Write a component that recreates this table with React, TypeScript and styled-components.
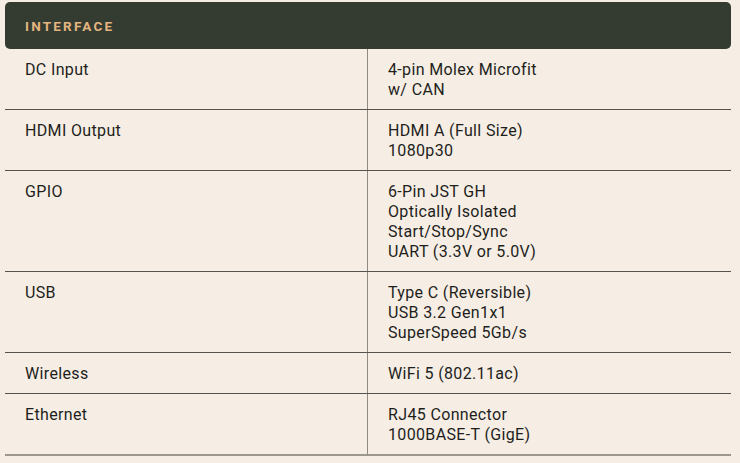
import styled, { createGlobalStyle } from "styled-components";

const GlobalStyle = createGlobalStyle`
  html, body {
    margin: 0;
    padding: 0;
    background: #f6eee4;
  }
  body {
    font-family: "Roboto", "Liberation Sans", sans-serif;
  }
`;

const Page = styled.div`
  padding: 2px 9px 0 5px;
`;

const Header = styled.div`
  background: #343c31;
  border-radius: 5px;
  height: 47px;
  display: flex;
  align-items: center;
  padding-left: 20px;
`;

const HeaderTitle = styled.h2`
  margin: 0;
  font-size: 13.5px;
  font-weight: 700;
  letter-spacing: 2.2px;
  color: #e4b580;
`;

const Table = styled.div`
  border-bottom: 2px solid #9c978f;
`;

const Row = styled.div<{ last?: boolean }>`
  display: grid;
  grid-template-columns: 362px 1fr;
  border-bottom: ${(p) => (p.last ? "none" : "1px solid #545350")};
`;

const Cell = styled.div<{ right?: boolean }>`
  padding: 11px 0 9px 20px;
  font-size: 16px;
  letter-spacing: 0.35px;
  line-height: 20px;
  color: #1e1e1c;
  border-left: ${(p) => (p.right ? "1px solid #8e8b85" : "none")};
`;

const Line = styled.div`
  white-space: nowrap;
`;

const rows: { label: string; values: string[] }[] = [
  { label: "DC Input", values: ["4-pin Molex Microfit", "w/ CAN"] },
  { label: "HDMI Output", values: ["HDMI A (Full Size)", "1080p30"] },
  {
    label: "GPIO",
    values: [
      "6-Pin JST GH",
      "Optically Isolated",
      "Start/Stop/Sync",
      "UART (3.3V or 5.0V)",
    ],
  },
  {
    label: "USB",
    values: ["Type C (Reversible)", "USB 3.2 Gen1x1", "SuperSpeed 5Gb/s"],
  },
  { label: "Wireless", values: ["WiFi 5 (802.11ac)"] },
  { label: "Ethernet", values: ["RJ45 Connector", "1000BASE-T (GigE)"] },
];

const App = () => {
  return (
    <>
      <GlobalStyle />
      <Page>
        <Header>
          <HeaderTitle>INTERFACE</HeaderTitle>
        </Header>
        <Table>
          {rows.map((row, i) => (
            <Row key={row.label} last={i === rows.length - 1}>
              <Cell>{row.label}</Cell>
              <Cell right>
                {row.values.map((v) => (
                  <Line key={v}>{v}</Line>
                ))}
              </Cell>
            </Row>
          ))}
        </Table>
      </Page>
    </>
  );
};

export default App;
